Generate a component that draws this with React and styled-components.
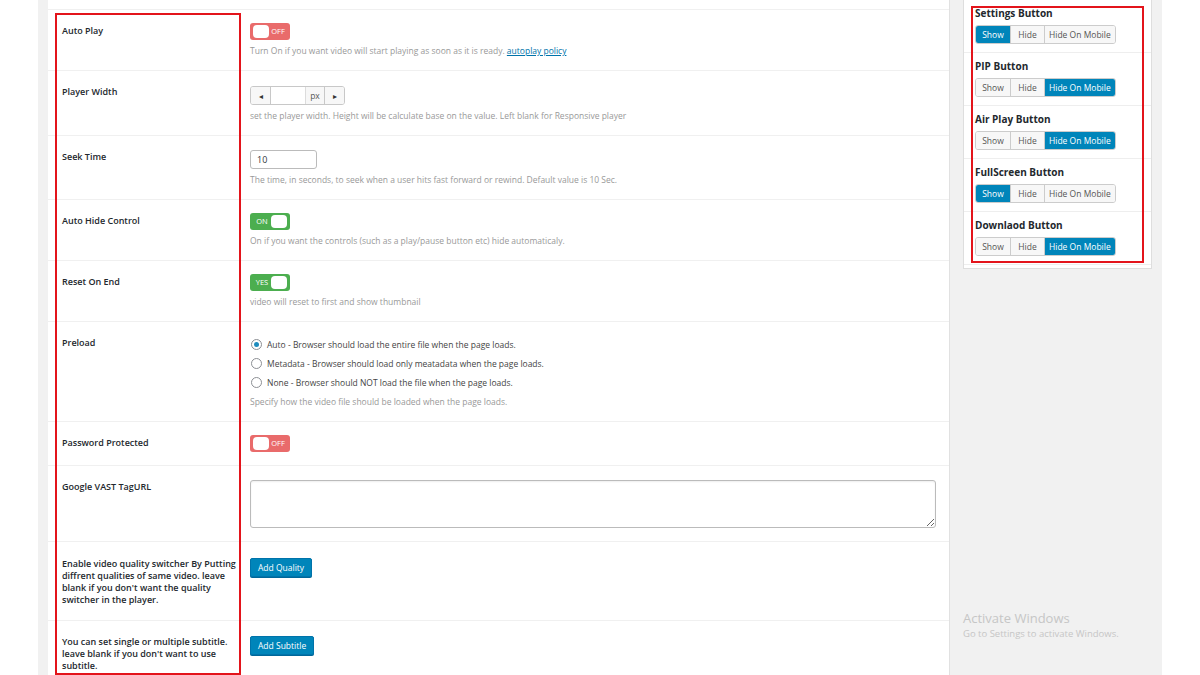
import React from "react";
import styled, { createGlobalStyle } from "styled-components";

const GlobalStyle = createGlobalStyle`
  html, body {
    margin: 0;
    padding: 0;
  }
  body {
    font-family: "Open Sans", "Noto Sans", sans-serif;
    color: #23282d;
    background: #fff;
  }
  * {
    box-sizing: border-box;
  }
`;

const sideItems = [
  { title: "Settings Button", active: 0 },
  { title: "PIP Button", active: 2 },
  { title: "Air Play Button", active: 2 },
  { title: "FullScreen Button", active: 0 },
  { title: "Downlaod Button", active: 2 },
];

function Switch({ on, label }) {
  return (
    <SwitchBox $on={on}>
      {on && <SwitchText>{label}</SwitchText>}
      <Knob />
      {!on && <SwitchText>{label}</SwitchText>}
    </SwitchBox>
  );
}

function App() {
  return (
    <>
      <GlobalStyle />
      <Page>
        <Wrap>
          <Main>
            <TopRow />
            <Row>
              <Label>Auto Play</Label>
              <Field>
                <Switch on={false} label="OFF" />
                <Desc>
                  Turn On if you want video will start playing as soon as it is
                  ready. <Link>autoplay policy</Link>
                </Desc>
              </Field>
            </Row>
            <Row>
              <Label>Player Width</Label>
              <Field>
                <NumberGroup>
                  <Step>◂</Step>
                  <NumberInput />
                  <Addon>px</Addon>
                  <Step $right>▸</Step>
                </NumberGroup>
                <Desc>
                  set the player width. Height will be calculate base on the
                  value. Left blank for Responsive player
                </Desc>
              </Field>
            </Row>
            <Row>
              <Label>Seek Time</Label>
              <Field>
                <TextInput>10</TextInput>
                <Desc>
                  The time, in seconds, to seek when a user hits fast forward or
                  rewind. Default value is 10 Sec.
                </Desc>
              </Field>
            </Row>
            <Row>
              <Label>Auto Hide Control</Label>
              <Field>
                <Switch on label="ON" />
                <Desc>
                  On if you want the controls (such as a play/pause button etc)
                  hide automaticaly.
                </Desc>
              </Field>
            </Row>
            <Row>
              <Label>Reset On End</Label>
              <Field>
                <Switch on label="YES" />
                <Desc>video will reset to first and show thumbnail</Desc>
              </Field>
            </Row>
            <Row>
              <Label>Preload</Label>
              <Field $pt={13}>
                <Radio>
                  <RadioDot $checked />
                  Auto - Browser should load the entire file when the page loads.
                </Radio>
                <Radio>
                  <RadioDot />
                  Metadata - Browser should load only meatadata when the page
                  loads.
                </Radio>
                <Radio>
                  <RadioDot />
                  None - Browser should NOT load the file when the page loads.
                </Radio>
                <Desc $mt={3}>
                  Specify how the video file should be loaded when the page
                  loads.
                </Desc>
              </Field>
            </Row>
            <Row>
              <Label>Password Protected</Label>
              <Field>
                <Switch on={false} label="OFF" />
              </Field>
            </Row>
            <Row>
              <Label>Google VAST TagURL</Label>
              <Field>
                <TextArea />
              </Field>
            </Row>
            <Row>
              <Label $pt={16}>
                Enable video quality switcher By Putting diffrent qualities of
                same video. leave blank if you don't want the quality switcher
                in the player.
              </Label>
              <Field $pt={14}>
                <Button>Add Quality</Button>
              </Field>
            </Row>
            <Row>
              <Label>
                You can set single or multiple subtitle. leave blank if you
                don't want to use subtitle.
              </Label>
              <Field>
                <Button>Add Subtitle</Button>
              </Field>
            </Row>
            <LeftMark />
          </Main>
          <Sidebar>
            <SideBox>
              {sideItems.map((item) => (
                <SideItem key={item.title}>
                  <SideTitle>{item.title}</SideTitle>
                  <BtnGroup>
                    {["Show", "Hide", "Hide On Mobile"].map((b, i) => (
                      <GroupBtn key={b} $active={i === item.active}>
                        {b}
                      </GroupBtn>
                    ))}
                  </BtnGroup>
                </SideItem>
              ))}
              <RightMark />
            </SideBox>
            <Watermark>
              <WmTitle>Activate Windows</WmTitle>
              <WmText>Go to Settings to activate Windows.</WmText>
            </Watermark>
          </Sidebar>
        </Wrap>
      </Page>
    </>
  );
}

export default App;

const Page = styled.div`
  width: 1200px;
  height: 675px;
  overflow: hidden;
  display: flex;
  padding-left: 38px;
  background: #fff;
`;

const Wrap = styled.div`
  width: 1124px;
  display: flex;
  padding-left: 10px;
  background: #f1f1f1;
`;

const Main = styled.div`
  position: relative;
  width: 902px;
  background: #fff;
  border-right: 1px solid #e1e1e1;
`;

const TopRow = styled.div`
  height: 10px;
  border-bottom: 1px solid #f0f0f0;
`;

const Row = styled.div`
  display: grid;
  grid-template-columns: 202px 1fr;
  border-bottom: 1px solid #f0f0f0;
`;

const Label = styled.div`
  padding: ${(p) => p.$pt || 15}px 10px 14px 14px;
  font-size: 9px;
  line-height: 12px;
  font-weight: 600;
  color: #23282d;
`;

const Field = styled.div`
  padding: ${(p) => p.$pt || 13}px 14px 13px 0;
  display: flex;
  flex-direction: column;
  align-items: flex-start;
`;

const Desc = styled.div`
  margin-top: ${(p) => p.$mt ?? 4}px;
  font-size: 8.5px;
  line-height: 13px;
  color: #999;
`;

const Link = styled.a`
  color: #0073aa;
  text-decoration: underline;
`;

const SwitchBox = styled.div`
  width: 40px;
  height: 17px;
  border-radius: 3px;
  padding: 2px 3px;
  display: flex;
  align-items: center;
  justify-content: space-between;
  background: ${(p) => (p.$on ? "#4cae4f" : "#e96b6b")};
`;

const Knob = styled.span`
  width: 16px;
  height: 13px;
  border-radius: 4px;
  background: #fff;
`;

const SwitchText = styled.span`
  flex: 1;
  text-align: center;
  font-size: 7.5px;
  color: #fff;
  line-height: 13px;
`;

const NumberGroup = styled.div`
  display: flex;
  height: 19px;
  border: 1px solid #c8c8c8;
  border-radius: 3px;
  overflow: hidden;
  margin-top: 2px;
`;

const Step = styled.span`
  width: 20px;
  display: flex;
  align-items: center;
  justify-content: center;
  background: #f7f7f7;
  font-size: 8px;
  color: #333;
  border-${(p) => (p.$right ? "left" : "right")}: 1px solid #c8c8c8;
`;

const NumberInput = styled.span`
  width: 34px;
  background: #fff;
`;

const Addon = styled.span`
  width: 19px;
  display: flex;
  align-items: center;
  justify-content: center;
  background: #f7f7f7;
  border-left: 1px solid #dcdcdc;
  font-size: 8.5px;
  color: #555;
`;

const TextInput = styled.div`
  width: 67px;
  height: 19px;
  margin-top: 1px;
  border: 1px solid #bbb;
  border-radius: 3px;
  padding: 0 6px;
  font-size: 9px;
  line-height: 17px;
  color: #32373c;
`;

const Radio = styled.label`
  display: flex;
  align-items: center;
  gap: 5px;
  height: 19px;
  font-size: 8.5px;
  color: #444;
`;

const RadioDot = styled.span`
  width: 11px;
  height: 11px;
  border-radius: 50%;
  border: 1px solid #8c8f94;
  background: #fff;
  display: flex;
  align-items: center;
  justify-content: center;
  margin-left: 1px;

  &::after {
    content: "";
    width: 5px;
    height: 5px;
    border-radius: 50%;
    background: ${(p) => (p.$checked ? "#1e8cbe" : "transparent")};
  }
`;

const TextArea = styled.textarea`
  width: 686px;
  height: 48px;
  border: 1px solid #bbb;
  border-radius: 3px;
  box-shadow: inset 0 1px 2px rgba(0, 0, 0, 0.07);
  font-family: inherit;
  margin: 1px 0 0;
`;

const Button = styled.button`
  height: 19px;
  padding: 0 7px;
  margin-top: 2px;
  border: 1px solid #0073aa;
  border-radius: 2px;
  background: #0085ba;
  color: #fff;
  font-family: inherit;
  font-size: 8.5px;
  box-shadow: 0 1px 0 #006799;
`;

const LeftMark = styled.div`
  position: absolute;
  left: 7px;
  top: 13px;
  width: 186px;
  height: 662px;
  border: 2px solid #e3141b;
  pointer-events: none;
`;

const Sidebar = styled.div`
  position: relative;
  flex: 1;
  padding-left: 13px;
`;

const SideBox = styled.div`
  position: relative;
  width: 189px;
  margin-top: -1px;
  background: #fff;
  border: 1px solid #dedede;
  padding-bottom: 3px;
`;

const SideItem = styled.div`
  padding: 6px 10px 8px 11px;
  border-bottom: 1px solid #eee;

  &:last-of-type {
    border-bottom: none;
  }
`;

const SideTitle = styled.div`
  font-size: 10px;
  font-weight: 700;
  line-height: 14px;
  margin-bottom: 5px;
  color: #23282d;
`;

const BtnGroup = styled.div`
  display: flex;
  width: fit-content;
  height: 19px;
  border-radius: 3px;
  overflow: hidden;
  border: 1px solid #ccc;
`;

const GroupBtn = styled.span`
  display: flex;
  align-items: center;
  padding: 0 4px;
  min-width: 34px;
  justify-content: center;
  font-size: 8.5px;
  background: ${(p) => (p.$active ? "#0085ba" : "#f7f7f7")};
  color: ${(p) => (p.$active ? "#fff" : "#555")};
  & + & {
    border-left: 1px solid ${(p) => (p.$active ? "#0073aa" : "#ccc")};
  }
`;

const RightMark = styled.div`
  position: absolute;
  left: 7px;
  top: 6px;
  width: 173px;
  height: 257px;
  border: 2px solid #e3141b;
  pointer-events: none;
`;

const Watermark = styled.div`
  position: absolute;
  left: 13px;
  top: 610px;
  color: #c6c6c6;
`;

const WmTitle = styled.div`
  font-size: 13px;
  line-height: 17px;
`;

const WmText = styled.div`
  font-size: 9.5px;
  line-height: 13px;
`;
